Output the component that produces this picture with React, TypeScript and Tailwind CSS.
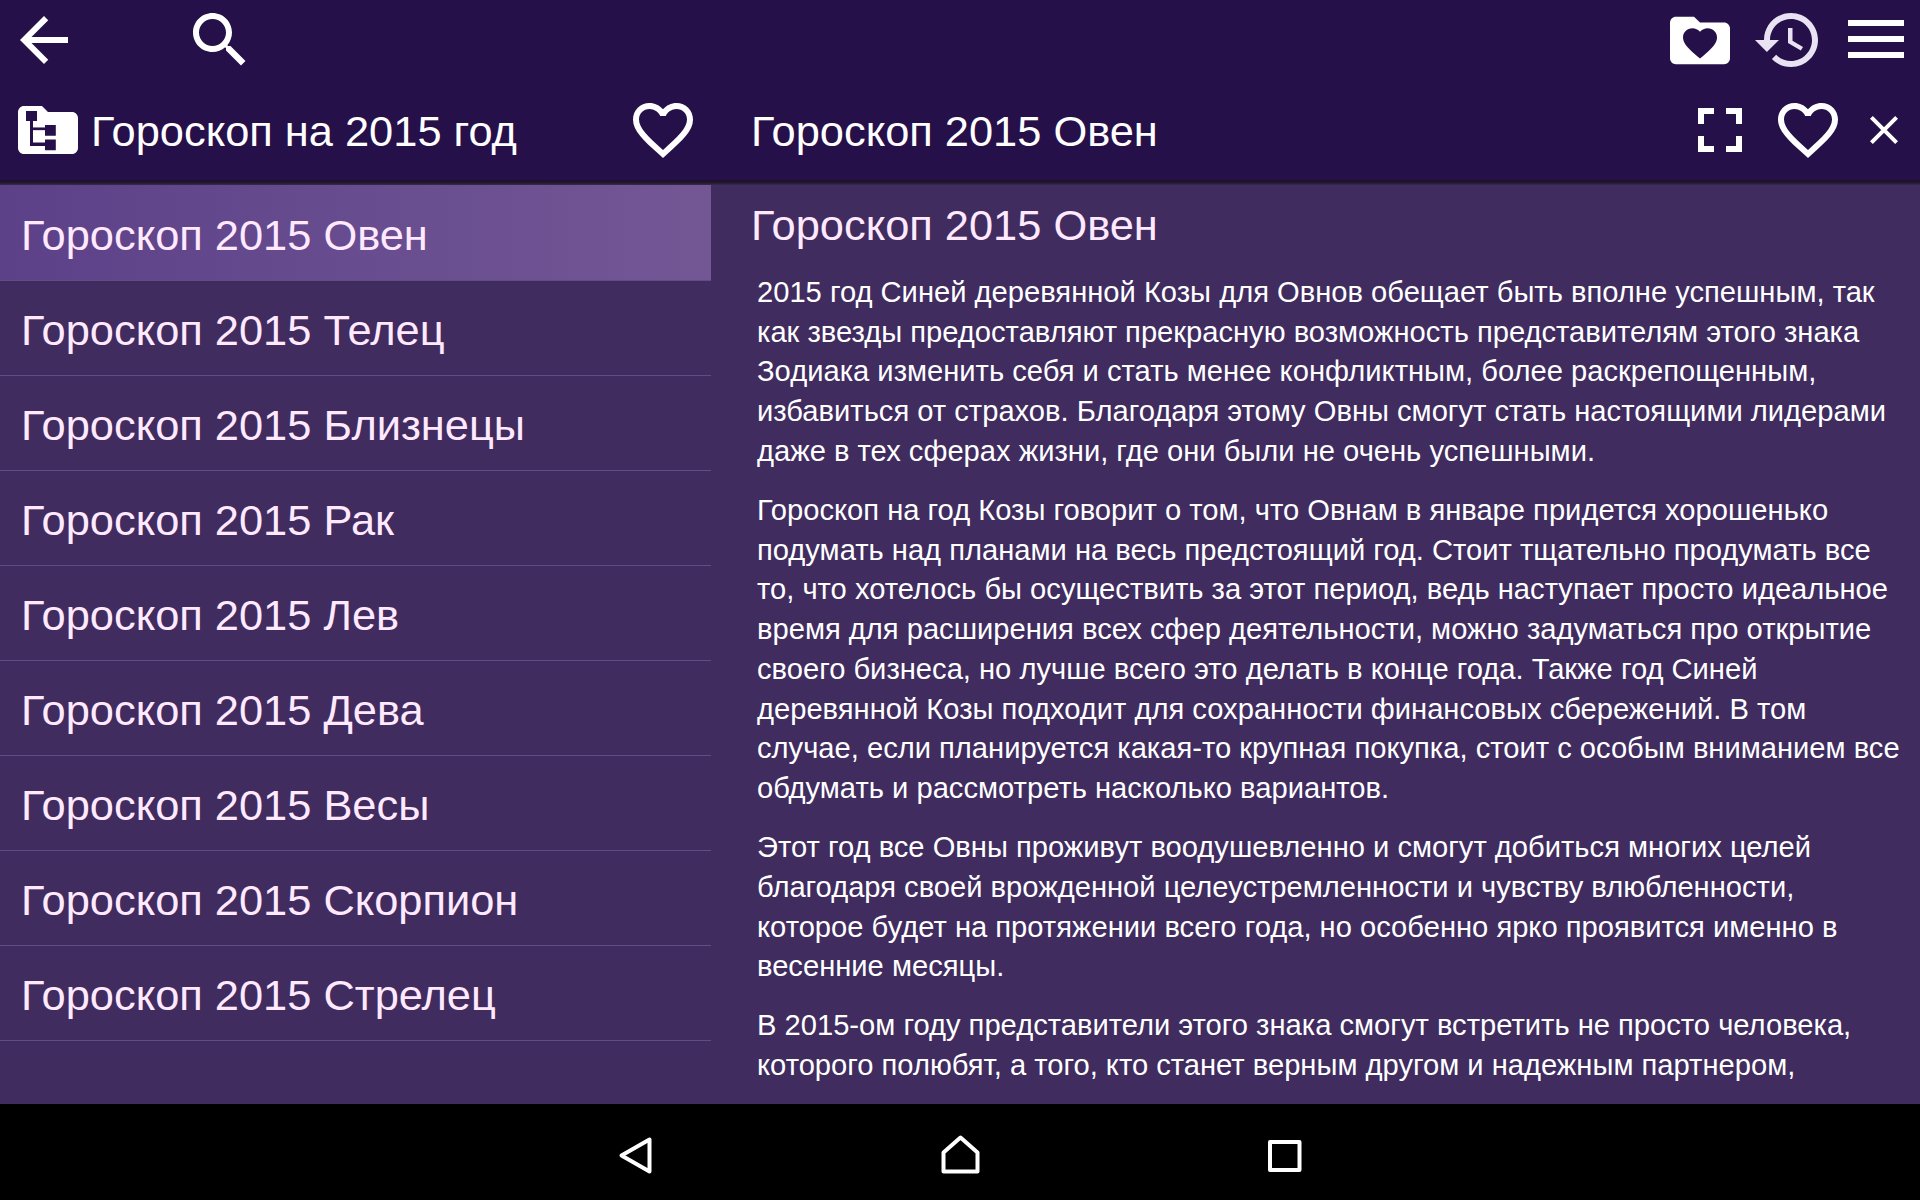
import type { ReactNode } from "react";

const signs = [
  "Гороскоп 2015 Овен",
  "Гороскоп 2015 Телец",
  "Гороскоп 2015 Близнецы",
  "Гороскоп 2015 Рак",
  "Гороскоп 2015 Лев",
  "Гороскоп 2015 Дева",
  "Гороскоп 2015 Весы",
  "Гороскоп 2015 Скорпион",
  "Гороскоп 2015 Стрелец",
];

// Each paragraph is an array of lines
const paragraphs = [
  [
    "2015 год Синей деревянной Козы для Овнов обещает быть вполне успешным, так",
    "как звезды предоставляют прекрасную возможность представителям этого знака",
    "Зодиака изменить себя и стать менее конфликтным, более раскрепощенным,",
    "избавиться от страхов. Благодаря этому Овны смогут стать настоящими лидерами",
    "даже в тех сферах жизни, где они были не очень успешными.",
  ],
  [
    "Гороскоп на год Козы говорит о том, что Овнам в январе придется хорошенько",
    "подумать над планами на весь предстоящий год. Стоит тщательно продумать все",
    "то, что хотелось бы осуществить за этот период, ведь наступает просто идеальное",
    "время для расширения всех сфер деятельности, можно задуматься про открытие",
    "своего бизнеса, но лучше всего это делать в конце года. Также год Синей",
    "деревянной Козы подходит для сохранности финансовых сбережений. В том",
    "случае, если планируется какая-то крупная покупка, стоит с особым вниманием все",
    "обдумать и рассмотреть насколько вариантов.",
  ],
  [
    "Этот год все Овны проживут воодушевленно и смогут добиться многих целей",
    "благодаря своей врожденной целеустремленности и чувству влюбленности,",
    "которое будет на протяжении всего года, но особенно ярко проявится именно в",
    "весенние месяцы.",
  ],
  [
    "В 2015-ом году представители этого знака смогут встретить не просто человека,",
    "которого полюбят, а того, кто станет верным другом и надежным партнером,",
  ],
];

const FOLDER = "M10 4H4c-1.1 0-1.99.9-1.99 2L2 18c0 1.1.9 2 2 2h16c1.1 0 2-.9 2-2V8c0-1.1-.9-2-2-2h-8l-2-2z";
const HEART =
  "M12 21.35l-1.45-1.32C5.4 15.36 2 12.28 2 8.5 2 5.42 4.42 3 7.5 3c1.74 0 3.41.81 4.5 2.09C13.09 3.81 14.76 3 16.5 3 19.58 3 22 5.42 22 8.5c0 3.78-3.4 6.86-8.55 11.54L12 21.35z";
const HEART_OUTLINE =
  "M16.5 3c-1.74 0-3.41.81-4.5 2.09C10.91 3.81 9.24 3 7.5 3 4.42 3 2 5.42 2 8.5c0 3.78 3.4 6.86 8.55 11.54L12 21.35l1.45-1.32C18.6 15.36 22 12.28 22 8.5 22 5.42 19.58 3 16.5 3zm-4.4 15.55l-.1.1-.1-.1C7.14 14.24 4 11.39 4 8.5 4 6.5 5.5 5 7.5 5c1.54 0 3.04.99 3.57 2.36h1.87C13.46 5.99 14.96 5 16.5 5c2 0 3.5 1.5 3.5 3.5 0 2.89-3.14 5.74-7.9 10.05z";

const Icon = ({ children, className = "" }: { children: ReactNode; className?: string }) => (
  <svg viewBox="0 0 24 24" fill="currentColor" className={`size-[72px] shrink-0 ${className}`}>
    {children}
  </svg>
);

const TopBar = () => (
  <div className="flex h-20 items-start pt-1 pl-2 pr-4">
    <Icon>
      <path d="M20 11H7.83l5.59-5.59L12 4l-8 8 8 8 1.41-1.41L7.83 13H20v-2z" />
    </Icon>
    <Icon className="ml-[104px]">
      <path d="M15.5 14h-.79l-.28-.27C15.41 12.59 16 11.11 16 9.5 16 5.91 13.09 3 9.5 3S3 5.91 3 9.5 5.91 16 9.5 16c1.61 0 3.09-.59 4.23-1.57l.27.28v.79l5 4.99L20.49 19l-4.99-5zm-6 0C7.01 14 5 11.99 5 9.5S7.01 5 9.5 5 14 7.01 14 9.5 11.99 14 9.5 14z" />
    </Icon>
    <Icon className="ml-auto mr-4">
      <path d={FOLDER} transform="translate(0 .25) scale(1 .99)" />
      <path className="fill-[#26104a]" d={HEART} transform="translate(5.2 6.45) scale(.567 .55)" />
    </Icon>
    <Icon className="mr-6 text-[#e9e2f3]">
      <path d="M13 3c-4.97 0-9 4.03-9 9H1l3.89 3.89.07.14L9 12H6c0-3.87 3.13-7 7-7s7 3.13 7 7-3.13 7-7 7c-1.93 0-3.68-.79-4.94-2.06l-1.42 1.42C8.27 19.99 10.51 21 13 21c4.97 0 9-4.03 9-9s-4.03-9-9-9zm-1 5v5l4.28 2.54.72-1.21-3.5-2.08V8H12z" />
    </Icon>
    <div className="flex w-14 flex-col gap-2.5 pt-4">
      <div className="h-1.5 bg-white" />
      <div className="h-1.5 bg-white" />
      <div className="h-1.5 bg-white" />
    </div>
  </div>
);

const TitleBar = () => (
  <div className="flex h-[100px] items-center">
    <div className="flex w-[711px] shrink-0 items-center pl-3 pr-3">
      <Icon>
        <path d={FOLDER} />
        <g className="fill-[#26104a]">
          <path d="M4.67 5.67h3.67V9H4.67zM11 10.35h3.6v3.55H11zM11 15.15h3.6v3.6H11z" />
          <path d="M6 8.5h1v7.7h4.2v1.1H6z" />
          <path d="M6.5 11.15h4.7v.9H6.5z" />
        </g>
      </Icon>
      <div className="ml-[7px] pt-[3px] text-[43.4px] whitespace-nowrap">Гороскоп на 2015 год</div>
      <Icon className="ml-auto">
        <path d={HEART_OUTLINE} />
      </Icon>
    </div>
    <div className="flex flex-1 items-center pl-10 pr-[22px]">
      <div className="pt-[3px] text-[43.4px] whitespace-nowrap">Гороскоп 2015 Овен</div>
      <svg viewBox="0 0 44 44" fill="currentColor" className="ml-auto size-11">
        <path d="M0 0h16v6H6v10H0zM28 0h16v16h-6V6H28zM0 28h6v10h10v6H0zM38 28h6v16H28v-6h10z" />
      </svg>
      <Icon className="ml-[30px]">
        <path d={HEART_OUTLINE} />
      </Icon>
      <svg viewBox="0 0 28 28" className="ml-[26px] size-7" stroke="currentColor" strokeWidth="4">
        <path d="M1.4 1.4l25.2 25.2M26.6 1.4L1.4 26.6" />
      </svg>
    </div>
  </div>
);

const NavBar = () => (
  <div className="flex h-24 shrink-0 items-start bg-black pt-[31px] pl-[618px] text-white">
    <svg viewBox="0 0 36 40" className="h-10 w-9" fill="none" stroke="currentColor" strokeWidth="4" strokeLinejoin="round">
      <path d="M3.5 20.5L31.5 4.5V36.5z" />
    </svg>
    <svg viewBox="0 0 40 40" className="ml-[286px] size-10" fill="none" stroke="currentColor" strokeWidth="4" strokeLinejoin="round">
      <path d="M3.5 17.5L20.5 2.5L37.5 17.5V36.5H3.5z" />
    </svg>
    <svg viewBox="0 0 40 40" className="ml-[285px] size-10" fill="none" stroke="currentColor" strokeWidth="4" strokeLinejoin="round">
      <path d="M5 7H34.5V35H5z" />
    </svg>
  </div>
);

export default function App() {
  return (
    <div className="flex h-[1200px] w-[1920px] flex-col overflow-hidden bg-[#402c5f] font-['Liberation_Sans',Arial,sans-serif] text-white">
      <header className="h-[180px] shrink-0 bg-[#26104a]">
        <TopBar />
        <TitleBar />
      </header>
      {/* header shadow */}
      <div className="h-[5px] shrink-0 bg-linear-to-b from-[#1c1028] via-[#22172e] to-[#3a2a52]" />
      <main className="flex min-h-0 flex-1 overflow-hidden">
        <ul className="w-[711px] shrink-0 text-[43.4px] text-[#ffe9ff]">
          {signs.map((sign, i) => (
            <li
              key={sign}
              className={`flex items-center border-b border-[#604d85] pl-[21px] ${
                i === 0 ? "h-24 bg-linear-to-r from-[#5c4189] to-[#735795] pt-1.5" : "h-[95px] pt-[5px]"
              }`}
            >
              {sign}
            </li>
          ))}
        </ul>
        <article className="min-w-0 flex-1 pl-10 pt-[15px]">
          <h1 className="text-[43.4px] leading-[50px] text-[#ffe9ff]">Гороскоп 2015 Овен</h1>
          <div className="pl-1.5 pt-[23px] text-[29.15px] leading-[39.7px]">
            {paragraphs.map((lines, i) => (
              <p key={i} className="mb-[19.5px] whitespace-nowrap">
                {lines.map((line) => (
                  <span key={line} className="block">
                    {line}
                  </span>
                ))}
              </p>
            ))}
          </div>
        </article>
      </main>
      <NavBar />
    </div>
  );
}
